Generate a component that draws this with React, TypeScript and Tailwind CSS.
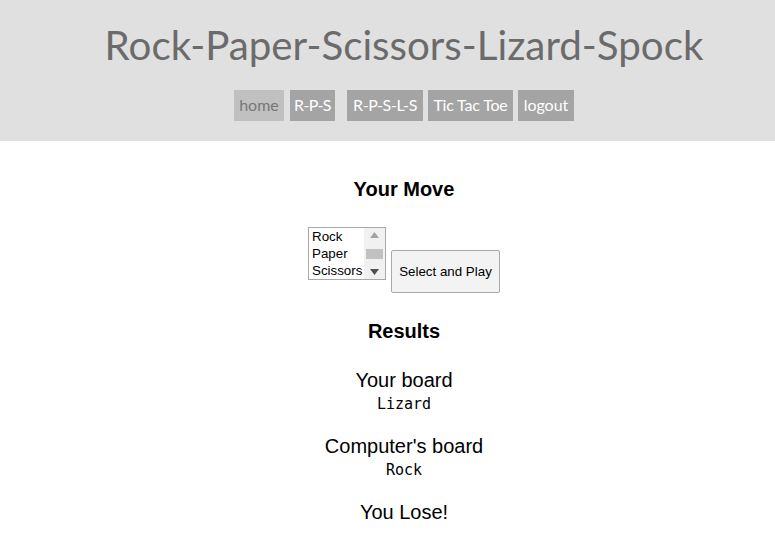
import React from "react";

export default function App() {
  const nav = [
    { t: "home", active: true, cls: "ml-0 w-[50px]" },
    { t: "R-P-S", active: false, cls: "ml-[6px] w-[45px] tracking-[-0.6px]" },
    { t: "R-P-S-L-S", active: false, cls: "ml-[12px] w-[76px] tracking-[-0.4px]" },
    { t: "Tic Tac Toe", active: false, cls: "ml-[5px] w-[85px] tracking-[-0.2px]" },
    { t: "logout", active: false, cls: "ml-[5px] w-[56px]" },
  ];
  const mono = { fontFamily: '"DejaVu Sans Mono", monospace' };
  return (
    <div className="w-[775px] h-[543px] bg-white overflow-hidden" style={{ fontFamily: '"Liberation Sans", Arial, sans-serif' }}>
      <header className="h-[141px] bg-[#e0e0e0] flex flex-col items-center pl-[33px]" style={{ fontFamily: 'Lato, sans-serif' }}>
        <h1 className="mt-[21px] text-[40.3px] leading-[48px] text-[#6b6b6b]">Rock-Paper-Scissors-Lizard-Spock</h1>
        <nav className="mt-[21px] flex">
          {nav.map((n) => (
            <span
              key={n.t}
              className={`${n.cls} h-[31px] pb-[1px] flex items-center justify-center whitespace-nowrap text-[16px] ${n.active ? "bg-[#c0c0c0] text-[#777777]" : "bg-[#a4a4a4] text-white"}`}
            >
              {n.t}
            </span>
          ))}
        </nav>
      </header>
      <main className="flex flex-col items-center text-black pl-[33px]">
        <div className="mt-[36px] text-[20px] leading-[24px] font-bold">Your Move</div>
        <div className="mt-[26px] flex items-start">
          <div className="w-[78px] h-[53px] border border-[#a9a9a9] flex text-[13.33px] leading-[17px]">
            <div className="flex-1 pl-[3px]">
              <div>Rock</div>
              <div>Paper</div>
              <div>Scissors</div>
            </div>
            <div className="w-[21px] bg-[#f1f1f1] flex flex-col items-center justify-between py-[4px]">
              <svg width="9" height="6" viewBox="0 0 9 6"><path d="M0 6 L4.5 0 L9 6 Z" fill="#a3a3a3" /></svg>
              <div className="w-[17px] h-[10px] bg-[#c1c1c1]" />
              <svg width="9" height="6" viewBox="0 0 9 6"><path d="M0 0 L4.5 6 L9 0 Z" fill="#505050" /></svg>
            </div>
          </div>
          <button className="ml-[5px] mt-[23px] w-[109px] h-[43px] border border-[#a9a9a9] bg-[#f3f3f3] text-[13.33px] text-black rounded-[2px]">
            Select and Play
          </button>
        </div>
        <div className="mt-[26px] text-[20px] leading-[24px] font-bold">Results</div>
        <div className="mt-[25px] text-[20px] leading-[24px]">Your board</div>
        <div className="text-[15px] leading-[24px]" style={mono}>Lizard</div>
        <div className="mt-[18px] text-[20px] leading-[24px]">Computer's board</div>
        <div className="text-[15px] leading-[24px]" style={mono}>Rock</div>
        <div className="mt-[18px] text-[20px] leading-[24px]">You Lose!</div>
      </main>
    </div>
  );
}
